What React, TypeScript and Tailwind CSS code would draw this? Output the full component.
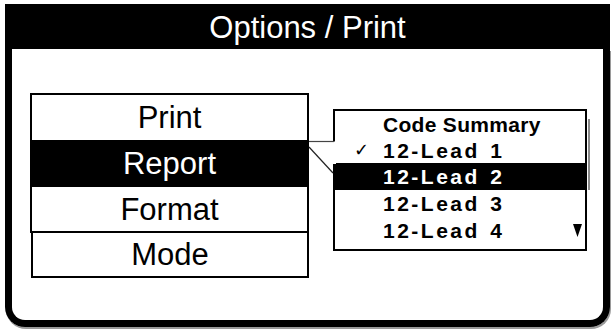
import React from 'react'

const menu = [
  { label: 'Print', h: 'h-[45px]', active: false },
  { label: 'Report', h: 'h-[47px]', active: true },
  { label: 'Format', h: 'h-[44px]', active: false },
]

const leads = [
  { label: 'Code Summary', h: 'h-[26px]', check: false, active: false, head: true },
  { label: '12-Lead 1', h: 'h-[26px]', check: true, active: false, head: false },
  { label: '12-Lead 2', h: 'h-[27px]', check: false, active: true, head: false },
  { label: '12-Lead 3', h: 'h-[27px]', check: false, active: false, head: false },
  { label: '12-Lead 4', h: 'h-[27px]', check: false, active: false, head: false, more: true },
]

const App = () => {
  return (
    <div className="w-[611px] h-[329px] bg-white overflow-hidden pt-[4px] pl-[5px] font-['Liberation_Sans',Arial,sans-serif]">
      <div className="w-[605px] h-[323px] flex flex-col">
        <div className="h-[45px] bg-black text-white text-[31px] leading-none flex items-center justify-center pt-[2px]">
          Options / Print
        </div>

        <div className="flex-1 border-x-[7px] border-b-[7px] border-black rounded-b-[20px] shadow-[1px_2px_0_#9a9a9a] flex items-start pl-[18px] pt-[44px]">
          <div className="w-[279px] flex flex-col">
            <div className="border-2 border-black flex flex-col">
              {menu.map((item) => (
                <div
                  key={item.label}
                  className={`${item.h} flex items-center justify-center text-[31px] leading-none ${
                    item.active ? 'bg-black text-white' : 'text-black'
                  }`}
                >
                  {item.label}
                </div>
              ))}
            </div>
            <div className="-mt-[2px] ml-[1px] w-[278px] h-[47px] border-2 border-black flex items-center justify-center text-[31px] leading-none text-black">
              Mode
            </div>
          </div>

          <div className="relative ml-[24px] mt-[16px] w-[254px] h-[142px] border-2 border-black flex flex-col">
            {leads.map((row) => (
              <div
                key={row.label}
                className={`${row.h} flex items-center text-[21px] font-bold leading-none ${
                  row.active ? 'bg-black text-white' : 'text-black'
                }`}
              >
                <div className="w-[48px] pl-[19px] font-['DejaVu_Sans',sans-serif] font-normal text-[18px]">
                  {row.check ? '✓' : ''}
                </div>
                <span className={row.head ? 'tracking-[0.3px]' : 'tracking-[2.5px] [word-spacing:2px]'}>{row.label}</span>
                {row.more && (
                  <svg className="ml-auto mr-[3px]" width="9" height="13" viewBox="0 0 9 13">
                    <polygon points="0,0 9,0 4.5,13" fill="black" />
                  </svg>
                )}
              </div>
            ))}

            <div className="absolute -right-[5px] top-[8px] w-[2px] h-[71px] bg-[#8a8a8a]" />

            <svg className="absolute left-[-28px] top-[28px]" width="30" height="40" viewBox="0 0 30 40">
              <rect x="25.5" y="2.5" width="3.5" height="22.5" fill="white" />
              <line x1="2" y1="2.5" x2="27" y2="2.5" stroke="#444" strokeWidth="1.2" />
              <line x1="2" y1="8" x2="26" y2="34" stroke="#222" strokeWidth="1.2" />
            </svg>
          </div>
        </div>
      </div>
    </div>
  )
}

export default App
